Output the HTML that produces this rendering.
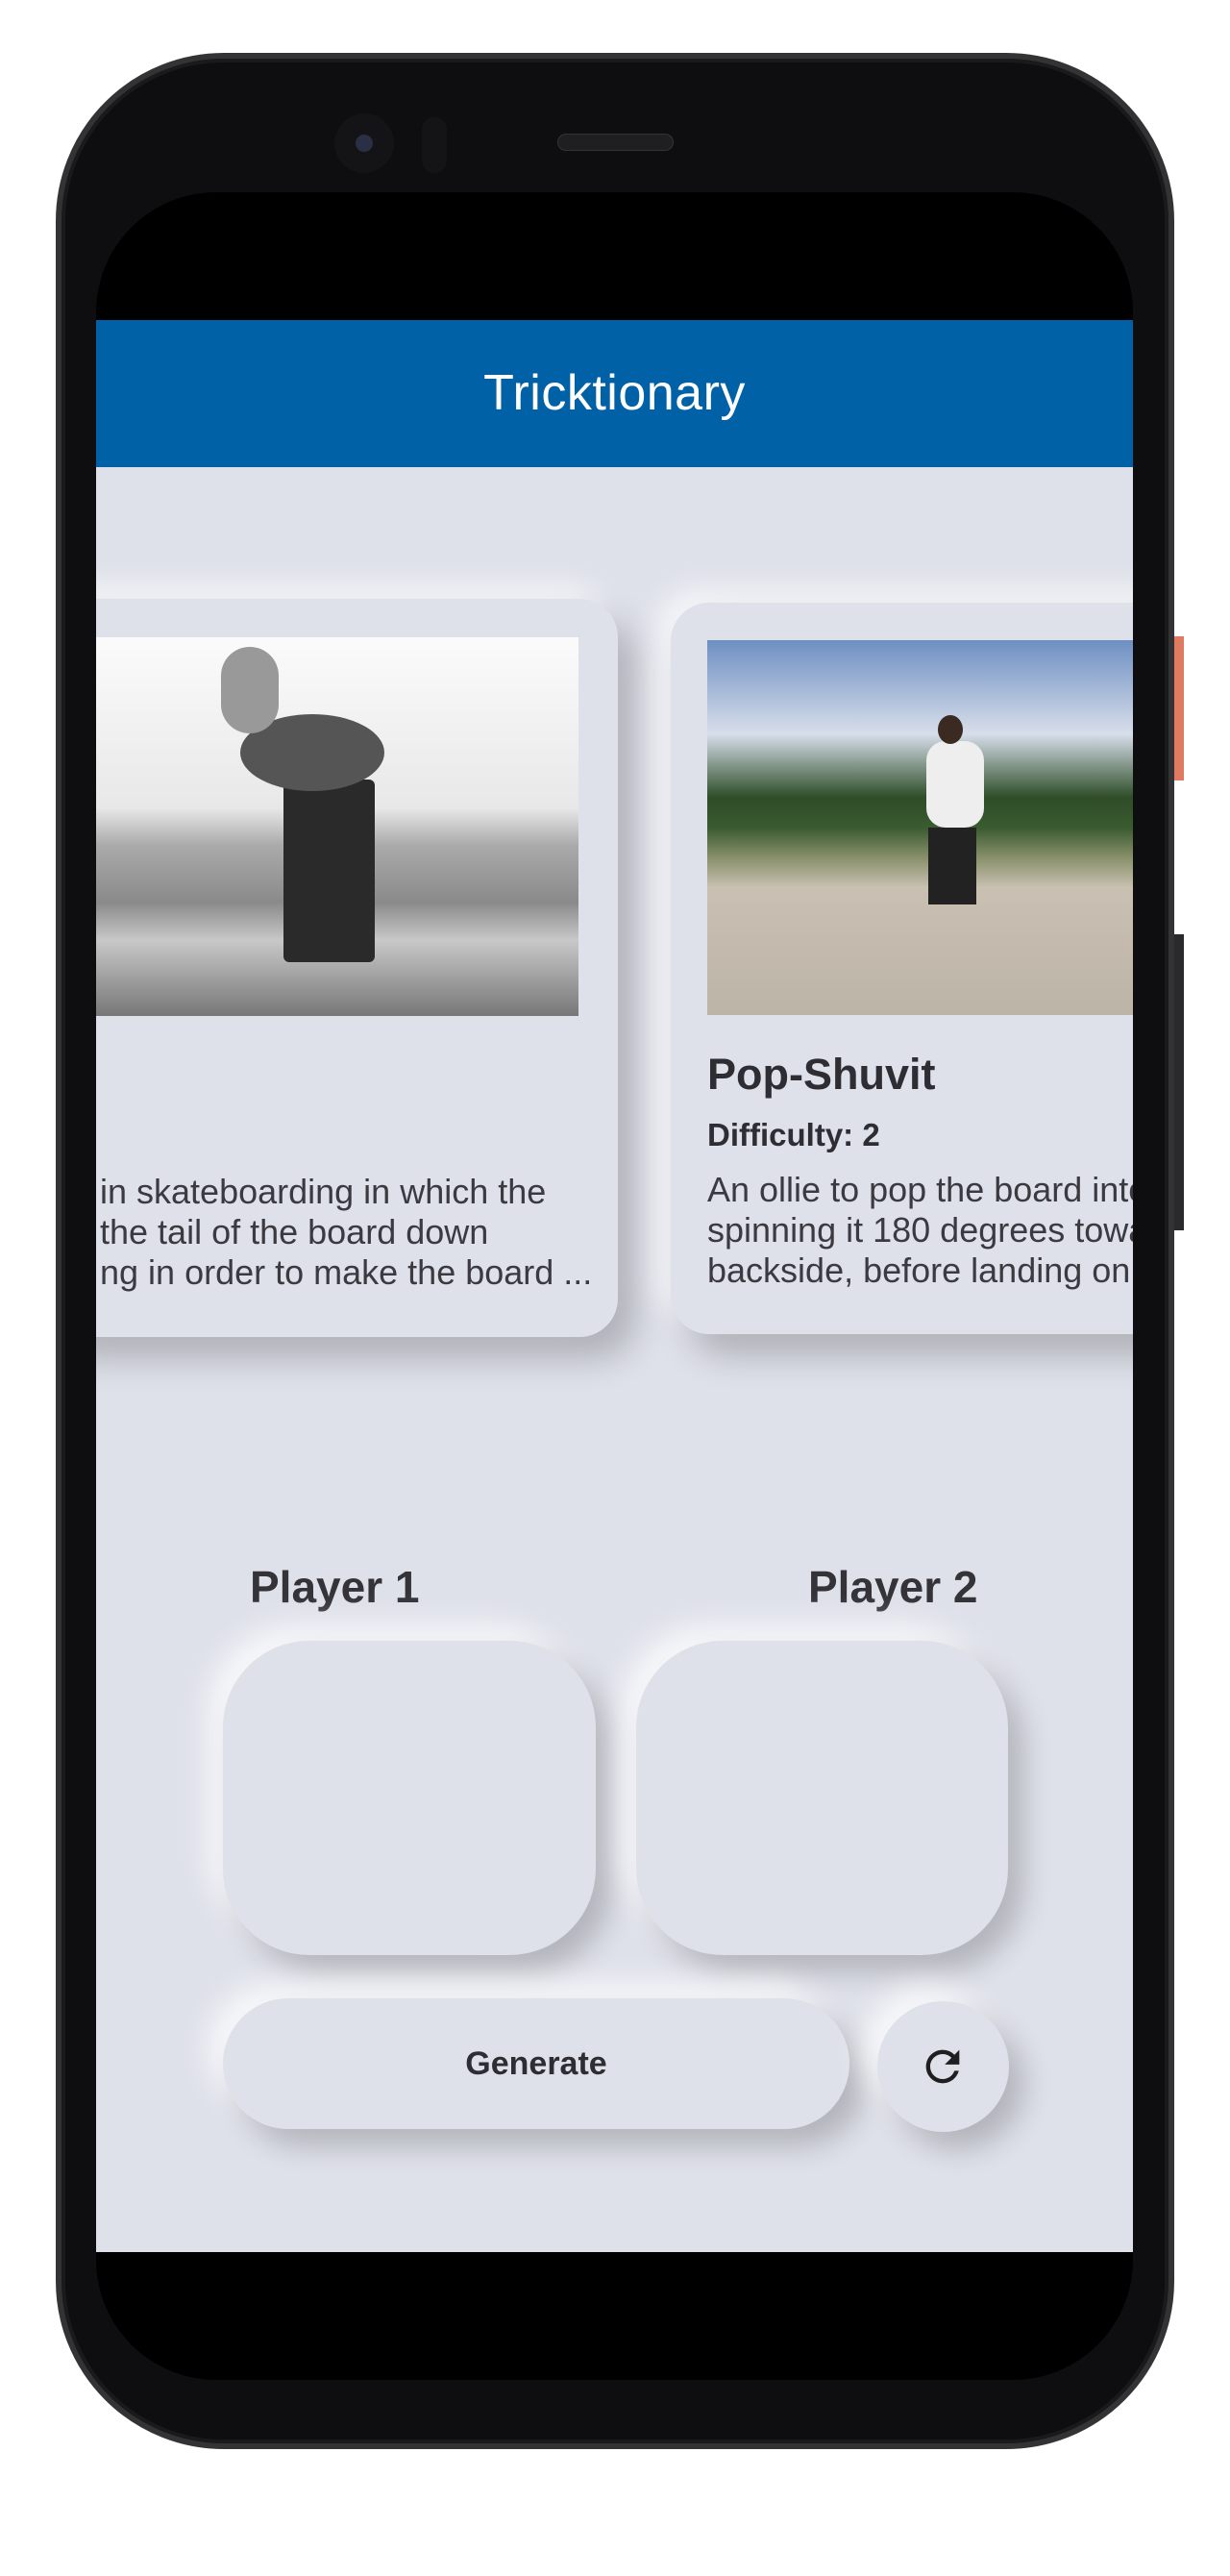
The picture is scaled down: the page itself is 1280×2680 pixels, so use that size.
<!DOCTYPE html>
<html><head><meta charset="utf-8"><style>
*{margin:0;padding:0;box-sizing:border-box}
body{width:1280px;height:2680px;background:#fff;position:relative;overflow:hidden;font-family:"Liberation Sans",sans-serif}
.phone{position:absolute;left:58px;top:55px;width:1164px;height:2493px;border-radius:175px;background:#0e0e10;border:6px solid #333335;box-shadow:inset 0 0 0 4px #1a1a1b}
.btn{position:absolute;background:#2a2a2b}
.screen{position:absolute;left:100px;top:200px;width:1079px;height:2276px;border-radius:125px;background:#000;overflow:hidden}
.app{position:absolute;left:0;top:133px;width:1079px;height:2010px;background:#dfe1ea;overflow:hidden}
.hdr{position:absolute;left:0;top:0;width:100%;height:153px;background:#0061a6;color:#fff;font-size:52px;text-align:center;line-height:153px;letter-spacing:.5px}
.card{position:absolute;background:#dfe1ea;border-radius:40px;box-shadow:18px 22px 36px rgba(0,0,0,.22),-14px -14px 30px rgba(255,255,255,.7)}
.txt{position:absolute;color:#3a3a40;font-size:36px;line-height:42px;white-space:nowrap}
.neo{position:absolute;background:#dfe1ea;box-shadow:16px 18px 30px rgba(0,0,0,.2),-16px -16px 30px rgba(255,255,255,.75)}
.pl{position:absolute;font-weight:bold;font-size:46px;color:#333338}
</style></head><body>
<div class="btn" style="left:1220px;top:662px;width:12px;height:150px;background:#e07a60"></div>
<div class="btn" style="left:1220px;top:972px;width:12px;height:308px"></div>
<div class="phone"></div>
<div style="position:absolute;left:348px;top:118px;width:62px;height:62px;border-radius:50%;background:#141416"></div>
<div style="position:absolute;left:370px;top:140px;width:18px;height:18px;border-radius:50%;background:#2a2f45"></div>
<div style="position:absolute;left:439px;top:122px;width:26px;height:58px;border-radius:13px;background:#141416"></div>
<div style="position:absolute;left:580px;top:139px;width:121px;height:18px;border-radius:9px;background:#1f1f21;border:1px solid #333"></div>
<div class="screen">
 <div class="app">
  <div class="hdr">Tricktionary</div>
  <div class="card" style="left:-60px;top:290px;width:603px;height:768px">
   <div style="position:absolute;left:60px;top:40px;width:502px;height:394px;background:linear-gradient(#fbfbfb 0%,#e8e8e8 45%,#aaa 55%,#8a8a8a 70%,#c8c8c8 80%,#777 100%)">
    <div style="position:absolute;left:195px;top:148px;width:95px;height:190px;background:#2a2a2a;border-radius:6px"></div>
    <div style="position:absolute;left:150px;top:80px;width:150px;height:80px;background:#555;border-radius:50%"></div>
    <div style="position:absolute;left:130px;top:10px;width:60px;height:90px;background:#999;border-radius:30px"></div>
   </div>
   <div class="txt" style="left:64px;top:596px">in skateboarding in which the<br>the tail of the board down<br>ng in order to make the board ...</div>
  </div>
  <div class="card" style="left:598px;top:294px;width:560px;height:761px">
   <div style="position:absolute;left:38px;top:39px;width:460px;height:390px;background:linear-gradient(#6e8fc2 0%,#d7deea 25%,#2e4d28 42%,#3a5a30 50%,#88906a 58%,#c9c0b2 66%,#bdb4a8 100%)">
    <div style="position:absolute;left:228px;top:105px;width:60px;height:90px;background:#eee;border-radius:20px"></div>
    <div style="position:absolute;left:240px;top:78px;width:26px;height:30px;background:#3a2a22;border-radius:50%"></div>
    <div style="position:absolute;left:230px;top:195px;width:50px;height:80px;background:#222"></div>
   </div>
   <div style="position:absolute;left:38px;top:465px;font-weight:bold;font-size:45px;color:#2d2d33">Pop-Shuvit</div>
   <div style="position:absolute;left:38px;top:535px;font-weight:bold;font-size:33px;color:#2d2d33">Difficulty: 2</div>
   <div class="txt" style="left:38px;top:590px">An ollie to pop the board into<br>spinning it 180 degrees toward<br>backside, before landing on it</div>
  </div>
  <div class="pl" style="left:160px;top:1291px">Player 1</div>
  <div class="pl" style="left:741px;top:1291px">Player 2</div>
  <div class="neo" style="left:132px;top:1374px;width:388px;height:327px;border-radius:90px"></div>
  <div class="neo" style="left:562px;top:1374px;width:387px;height:327px;border-radius:90px"></div>
  <div class="neo" style="left:132px;top:1746px;width:652px;height:136px;border-radius:68px;text-align:center;line-height:136px;font-weight:bold;font-size:34px;color:#2d2d33">Generate</div>
  <div class="neo" style="left:813px;top:1749px;width:137px;height:136px;border-radius:50%">
   <svg style="position:absolute;left:42px;top:42px" width="52" height="52" viewBox="0 0 24 24"><path fill="#1f1f22" d="M17.65 6.35A7.958 7.958 0 0 0 12 4c-4.42 0-7.99 3.58-7.99 8s3.57 8 7.99 8c3.73 0 6.84-2.55 7.730-6h-2.08A5.99 5.99 0 0 1 12 18c-3.31 0-6-2.69-6-6s2.69-6 6-6c1.66 0 3.14.69 4.22 1.78L13 11h7V4l-2.35 2.35z"/></svg>
  </div>
 </div>
</div>
</body></html>
